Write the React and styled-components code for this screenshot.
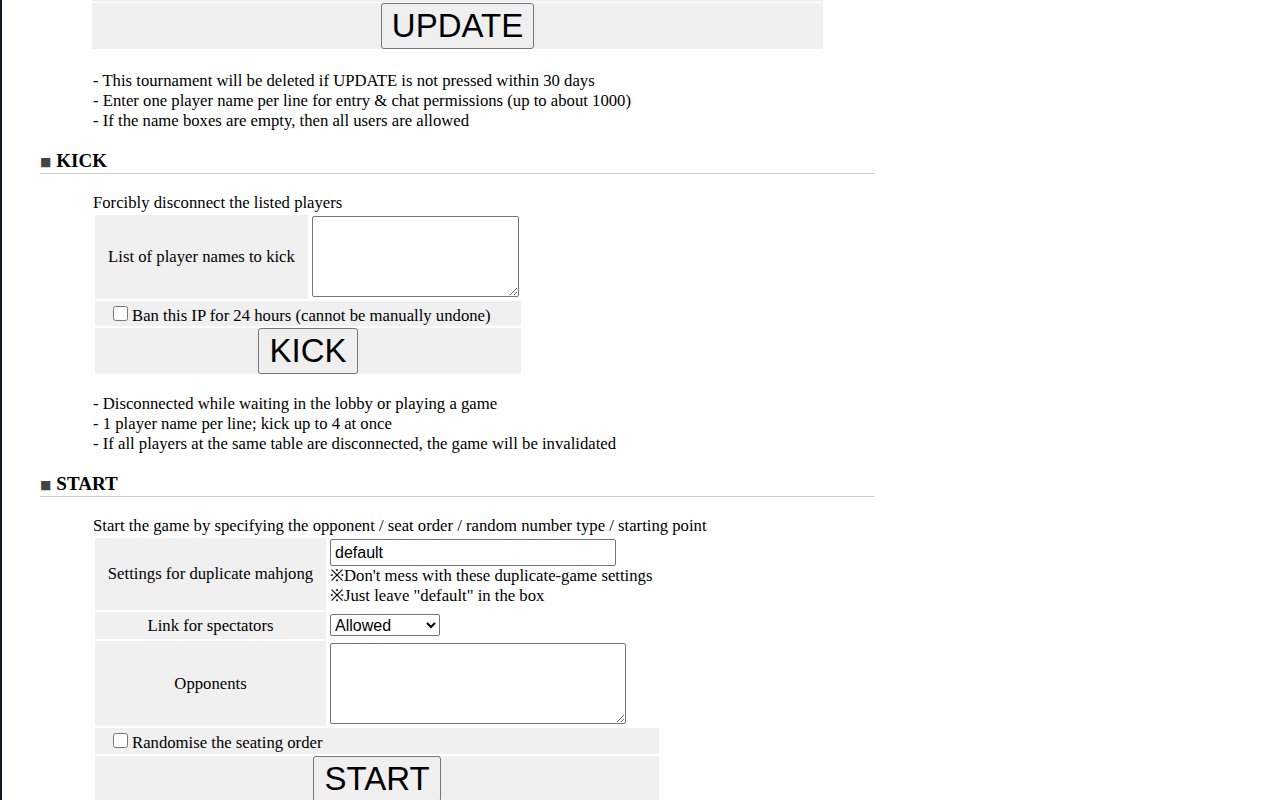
import React from "react";
import styled, { createGlobalStyle } from "styled-components";

const GlobalStyle = createGlobalStyle`
  html, body {
    margin: 0;
    background: #fff;
  }
  body {
    border-left: 2px solid #0f1a25;
    min-height: 100vh;
    box-sizing: border-box;
    font-family: "Liberation Serif", "Times New Roman", serif;
    font-size: 16.7px;
    color: #000;
  }
`;

const Page = styled.div`
  padding-left: 38px;
  width: 835px;
  padding-bottom: 40px;
`;

const UpdateTable = styled.div`
  margin-left: 52px;
  width: 731px;
  display: flex;
  flex-direction: column;
  gap: 1px;
`;

const PrevRowEdge = styled.div`
  height: 2px;
  background: #f0f0f0;
`;

const ButtonRow = styled.div`
  grid-column: 1 / -1;
  height: 46px;
  background: #f0f0f0;
  display: flex;
  justify-content: center;
`;

const BigButton = styled.button`
  font-family: "Liberation Sans", Arial, sans-serif;
  font-size: 33px;
  height: 46px;
  padding: 0 10px;
  border: 1px solid #767676;
  border-radius: 3px;
  background: #efefef;
  color: #000;
  cursor: pointer;
`;

const Notes = styled.div`
  margin: ${(p) => p.$top}px 0 0 53px;
  line-height: 20px;
`;

const SectionTitle = styled.h3`
  margin: 19px 0 0;
  font-size: 19px;
  line-height: 22px;
  height: 22px;
  font-weight: bold;
  padding-bottom: 1px;
  border-bottom: 1px solid #cfcfcf;
`;

const Square = styled.span`
  font-family: "DejaVu Sans", sans-serif;
  font-size: 12px;
  line-height: 1;
  color: #444;
  margin-right: 5px;
  vertical-align: 1px;
`;

const Lead = styled.div`
  margin: 19px 0 0 53px;
  line-height: 20px;
`;

const FormTable = styled.div`
  margin: 0 0 0 53px;
  padding: 2px;
  display: grid;
  grid-template-columns: ${(p) => p.$cols};
  gap: 2px;
  width: max-content;
`;

const LabelCell = styled.div`
  background: #f0f0f0;
  display: flex;
  align-items: center;
  justify-content: center;
  text-align: center;
  padding: 0 12px;
`;

const ValueCell = styled.div`
  display: flex;
  flex-direction: column;
  justify-content: center;
  align-items: flex-start;
  padding: ${(p) => p.$pad || "1px 2px 2px"};
  line-height: 20px;
`;

const Hints = styled.div`
  padding-bottom: 2px;
`;

const TextBox = styled.textarea`
  display: block;
  width: ${(p) => p.$w}px;
  height: 81px;
  box-sizing: border-box;
  margin: 0;
  border: 1px solid #767676;
  border-radius: 2px;
  font-family: "Liberation Mono", monospace;
  font-size: 13px;
`;

const TextInput = styled.input`
  width: 286px;
  height: 27px;
  box-sizing: border-box;
  margin: 0;
  padding: 1px 4px;
  border: 1px solid #767676;
  border-radius: 2px;
  font-family: "Liberation Sans", Arial, sans-serif;
  font-size: 16px;
`;

const Select = styled.select`
  width: 110px;
  height: 22px;
  margin: 0;
  font-family: "Liberation Sans", Arial, sans-serif;
  font-size: 16px;
  border: 1px solid #767676;
  border-radius: 2px;
  background: #fff;
  color: #000;
`;

const CheckRow = styled.label`
  grid-column: 1 / -1;
  height: ${(p) => p.$h}px;
  box-sizing: border-box;
  background: #f0f0f0;
  display: flex;
  align-items: flex-start;
  padding: 5px 0 0 14px;
  line-height: 20px;
`;

const Check = styled.input`
  width: 15px;
  height: 15px;
  margin: 0 4px 0 4px;
`;

const App = () => {
  return (
    <>
      <GlobalStyle />
      <Page>
        <UpdateTable>
          <PrevRowEdge />
          <ButtonRow>
            <BigButton>UPDATE</BigButton>
          </ButtonRow>
        </UpdateTable>

        <Notes $top={22}>
          <div>- This tournament will be deleted if UPDATE is not pressed within 30 days</div>
          <div>- Enter one player name per line for entry &amp; chat permissions (up to about 1000)</div>
          <div>- If the name boxes are empty, then all users are allowed</div>
        </Notes>

        <SectionTitle>
          <Square>■</Square>KICK
        </SectionTitle>
        <Lead>Forcibly disconnect the listed players</Lead>
        <FormTable $cols="213px 211px">
          <LabelCell>List of player names to kick</LabelCell>
          <ValueCell>
            <TextBox $w={207} />
          </ValueCell>
          <CheckRow $h={25}>
            <Check type="checkbox" />
            Ban this IP for 24 hours (cannot be manually undone)
          </CheckRow>
          <ButtonRow>
            <BigButton>KICK</BigButton>
          </ButtonRow>
        </FormTable>

        <Notes $top={18}>
          <div>- Disconnected while waiting in the lobby or playing a game</div>
          <div>- 1 player name per line; kick up to 4 at once</div>
          <div>- If all players at the same table are disconnected, the game will be invalidated</div>
        </Notes>

        <SectionTitle>
          <Square>■</Square>START
        </SectionTitle>
        <Lead>Start the game by specifying the opponent / seat order / random number type / starting point</Lead>
        <FormTable $cols="231px 331px">
          <LabelCell>Settings for duplicate mahjong</LabelCell>
          <ValueCell>
            <TextInput defaultValue="default" />
            <Hints>
              <div>※Don't mess with these duplicate-game settings</div>
              <div>※Just leave "default" in the box</div>
            </Hints>
          </ValueCell>
          <LabelCell>Link for spectators</LabelCell>
          <ValueCell $pad="2px 2px 3px">
            <Select defaultValue="allowed">
              <option value="allowed">Allowed</option>
              <option value="denied">Not allowed</option>
            </Select>
          </ValueCell>
          <LabelCell>Opponents</LabelCell>
          <ValueCell $pad="2px 2px">
            <TextBox $w={296} />
          </ValueCell>
          <CheckRow $h={26}>
            <Check type="checkbox" />
            Randomise the seating order
          </CheckRow>
          <ButtonRow>
            <BigButton>START</BigButton>
          </ButtonRow>
        </FormTable>
      </Page>
    </>
  );
};

export default App;
